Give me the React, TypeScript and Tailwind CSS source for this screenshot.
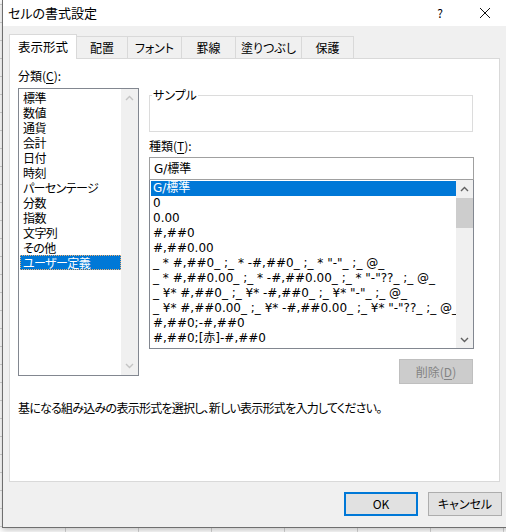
import React from "react";

const categories = [
  "標準",
  "数値",
  "通貨",
  "会計",
  "日付",
  "時刻",
  "パーセンテージ",
  "分数",
  "指数",
  "文字列",
  "その他",
  "ユーザー定義",
];

const formats = [
  "G/標準",
  "0",
  "0.00",
  "#,##0",
  "#,##0.00",
  '_ * #,##0_ ;_ * -#,##0_ ;_ * "-"_ ;_ @_ ',
  '_ * #,##0.00_ ;_ * -#,##0.00_ ;_ * "-"??_ ;_ @_ ',
  '_ ¥* #,##0_ ;_ ¥* -#,##0_ ;_ ¥* "-"_ ;_ @_ ',
  '_ ¥* #,##0.00_ ;_ ¥* -#,##0.00_ ;_ ¥* "-"??_ ;_ @_ ',
  "#,##0;-#,##0",
  "#,##0;[赤]-#,##0",
];

const tabs = [
  { label: "配置", w: "w-[51px]" },
  { label: "フォント", w: "w-[54px]" },
  { label: "罫線", w: "w-[54px]" },
  { label: "塗りつぶし", w: "w-[66px]" },
  { label: "保護", w: "w-[52px]" },
];

function Chevron({ up, color }: { up?: boolean; color: string }) {
  return (
    <svg width="9" height="6" viewBox="0 0 9 6">
      <polyline
        points={up ? "1,5 4.5,1.5 8,5" : "1,1 4.5,4.5 8,1"}
        fill="none"
        stroke={color}
        strokeWidth="1.4"
      />
    </svg>
  );
}

function Mn({ children }: { children: React.ReactNode }) {
  return <span className="underline underline-offset-2">{children}</span>;
}

export default function App() {
  return (
    <div
      className="relative flex h-[532px] w-[506px] overflow-hidden bg-white bg-[linear-gradient(to_right,#d4d4d4_1px,transparent_1px),linear-gradient(to_bottom,#d4d4d4_1px,transparent_1px)] bg-[size:73px_18px] bg-[position:65px_4px] text-[12px] text-black [font-family:'Noto_Sans_CJK_JP',sans-serif] [font-feature-settings:'palt']"
    >
      <div className="ml-[2px] flex h-[528px] w-[510px] shrink-0 flex-col border-b border-l border-[#6f6f6f] bg-[#f0f0f0] shadow-[0_2px_6px_rgba(0,0,0,0.25)]">
        {/* title bar */}
        <div className="flex h-[26px] items-center bg-white pl-[5px]">
          <span className="text-[13px] leading-[26px]">セルの書式設定</span>
          <span className="ml-auto mr-[36px] text-[12px]">?</span>
          <svg width="12" height="12" viewBox="0 0 12 12" className="mr-[21px]">
            <path d="M1 1 L11 11 M11 1 L1 11" stroke="#111" strokeWidth="1" />
          </svg>
        </div>

        <div className="flex flex-1 flex-col pl-[6px] pr-[10px] pt-[8px]">
          {/* tabs */}
          <div className="flex h-[24px] items-end">
            <div className="relative z-10 mb-[-1px] flex h-[25px] w-[68px] items-center justify-center border border-b-0 border-[#d9d9d9] bg-white text-[12.5px]">
              表示形式
            </div>
            {tabs.map((t) => (
              <div
                key={t.label}
                className={`flex h-[22px] ${t.w} items-center justify-center border border-b-0 border-l-0 border-[#d9d9d9] bg-[#f0f0f0] leading-none`}
              >
                {t.label}
              </div>
            ))}
          </div>

          {/* panel */}
          <div className="flex h-[424px] w-[491px] flex-col border border-[#d9d9d9] bg-white pl-[8px] pt-[9px]">
            <div className="flex">
              {/* category column */}
              <div className="flex w-[121px] flex-col">
                <div className="h-[15px] leading-[15px]">
                  分類(<Mn>C</Mn>):
                </div>
                <div className="mt-[5px] flex h-[288px] border border-[#828790] bg-white">
                  <div className="flex flex-1 flex-col py-[1px] pl-[1px] tracking-[-0.6px]">
                    {categories.map((c, i) =>
                      i === categories.length - 1 ? (
                        <div
                          key={c}
                          className="h-[15px] border border-dotted border-[#f0b070] bg-[#0078d7] pl-[2px] leading-[13px] text-white"
                        >
                          {c}
                        </div>
                      ) : (
                        <div key={c} className="h-[15px] pl-[3px] leading-[15px]">
                          {c}
                        </div>
                      )
                    )}
                  </div>
                  <div className="flex w-[17px] flex-col items-center justify-between bg-[#f0f0f0] py-[6px]">
                    <Chevron up color="#c4c4c4" />
                    <Chevron color="#c4c4c4" />
                  </div>
                </div>
              </div>

              {/* type column */}
              <div className="ml-[10px] flex w-[325px] flex-col pt-[20px]">
                <fieldset className="h-[44px] w-[324px] border border-[#dcdcdc] px-[1px]">
                  <legend className="ml-[1px] px-[1px] leading-[14px]">サンプル</legend>
                </fieldset>
                <div className="mt-[6px] h-[15px] leading-[15px]">
                  種類(<Mn>T</Mn>):
                </div>
                <div className="mt-[4px] flex h-[23px] items-center border border-[#a0a0a0] pl-[4px] [font-family:'DejaVu_Sans','Noto_Sans_CJK_JP',sans-serif]">
                  G/標準
                </div>
                <div className="flex h-[169px] border border-t-0 border-[#828790] bg-white">
                  <div className="flex flex-1 flex-col overflow-hidden pl-[1px] pt-[1px] [font-family:'DejaVu_Sans','Noto_Sans_CJK_JP',sans-serif]">
                    {formats.map((f, i) => (
                      <div
                        key={f}
                        className={`h-[15px] shrink-0 whitespace-pre pl-[2px] leading-[15px] ${
                          i === 0 ? "bg-[#0078d7] text-white" : ""
                        }`}
                      >
                        {f}
                      </div>
                    ))}
                  </div>
                  <div className="flex w-[17px] shrink-0 flex-col items-center bg-[#f0f0f0]">
                    <div className="flex h-[17px] items-center justify-center">
                      <Chevron up color="#606060" />
                    </div>
                    <div className="mt-[1px] h-[30px] w-[17px] bg-[#cdcdcd]" />
                    <div className="mt-auto flex h-[17px] items-center justify-center">
                      <Chevron color="#606060" />
                    </div>
                  </div>
                </div>
                <div className="mt-[10px] flex justify-end">
                  <div className="mr-[1px] flex h-[25px] w-[74px] items-center justify-center border border-[#bfbfbf] bg-[#cccccc] text-[#838383]">
                    削除(<Mn>D</Mn>)
                  </div>
                </div>
              </div>
            </div>

            <div className="mt-[16px] h-[15px] leading-[15px] tracking-[-0.75px]">
              基になる組み込みの表示形式を選択し、新しい表示形式を入力してください。
            </div>
          </div>

          {/* dialog buttons */}
          <div className="mt-[10px] flex justify-end gap-[10px]">
            <div className="flex h-[24px] w-[74px] items-center justify-center border-2 border-[#0078d7] bg-[#e1e1e1]">
              OK
            </div>
            <div className="flex h-[24px] w-[74px] items-center justify-center border border-[#adadad] bg-[#e1e1e1]">
              キャンセル
            </div>
          </div>
        </div>
      </div>
    </div>
  );
}
